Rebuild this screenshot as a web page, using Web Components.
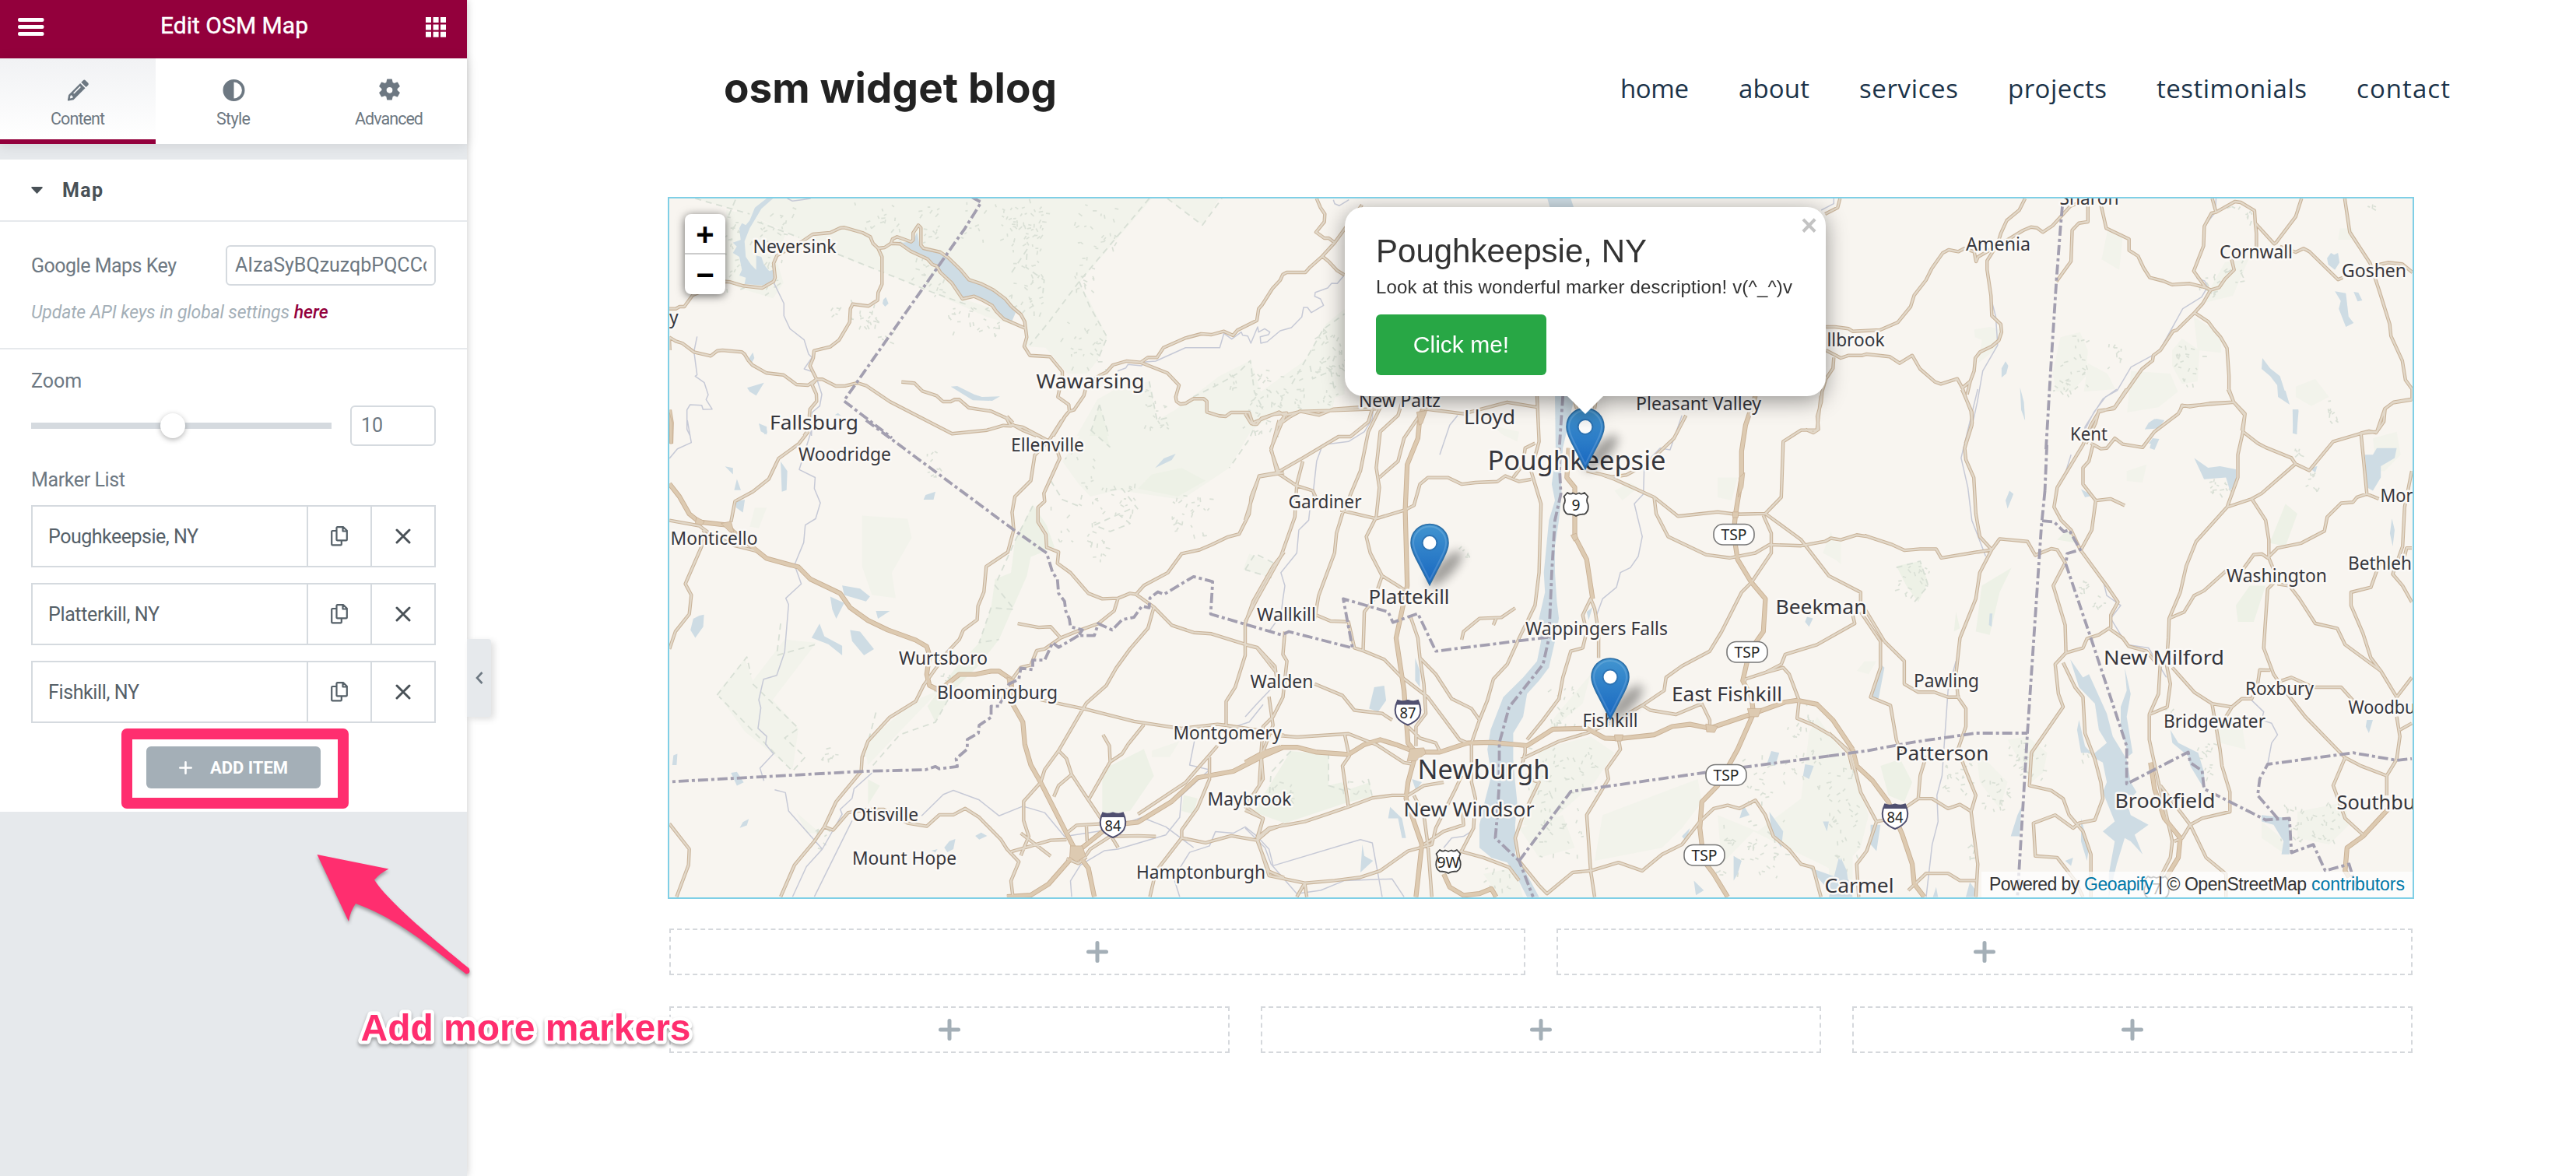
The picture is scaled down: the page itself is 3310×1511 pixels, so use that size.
<!DOCTYPE html>
<html lang="en">
<head>
<meta charset="utf-8">
<title>Edit OSM Map</title>
<style>
html,body{margin:0;padding:0;background:#fff}
body{width:3310px;height:1511px;overflow:hidden;font-family:Roboto,"Liberation Sans",sans-serif}
</style>
</head>
<body>
<app-shell></app-shell>
<script>
const define=(name,html,ready)=>customElements.define(name,class extends HTMLElement{
  constructor(){super();this.attachShadow({mode:'open'}).innerHTML=html;}
  connectedCallback(){if(ready)ready(this,this.shadowRoot);}
});

/* Text run that spreads its letters over a given width. */
define('fit-text',`<style>:host{display:inline-block;white-space:pre}</style><span><slot></slot></span>`,(el,root)=>{
  const w=+el.getAttribute('w'),s=root.querySelector('span'),n=el.textContent.length;
  const ls=(w-s.getBoundingClientRect().width)/(n-1);
  el.style.letterSpacing=ls+'px';el.style.marginRight=-ls+'px';
});

define('panel-header',`<style>
:host{display:flex;box-sizing:border-box;height:75px;background:#93003c;color:#fff;align-items:center;justify-content:space-between;padding:0 27px 9px 23px;font-size:30px;line-height:30px}
svg{display:block}.b{margin-top:4px}fit-text{-webkit-text-stroke:.4px #fff;position:relative;left:-1px}</style>
<svg class="b" width="34" height="24" viewBox="0 0 34 24" fill="#fff"><rect y="0" width="33.5" height="5" rx="2.2"/><rect y="9" width="33.5" height="5" rx="2.2"/><rect y="18" width="33.5" height="5" rx="2.2"/></svg>
<fit-text w="190">Edit OSM Map</fit-text>
<svg class="b" width="26" height="26" viewBox="0 0 26 26" fill="#fff"><path d="M0 0h7v7H0zM9.6 0h7v7h-7zM19 0h7v7h-7zM0 9.4h7v7H0zM9.6 9.4h7v7h-7zM19 9.4h7v7h-7zM0 18.8h7v7H0zM9.6 18.8h7v7h-7zM19 18.8h7v7h-7z"/></svg>`);

const tabIcons={
 pencil:'<path d="M20.4 1.2c.8-.9 2-.9 2.9 0l3.4 3.4c.8.8.8 2 0 2.9l-2.6 2.6-6.3-6.3zM16.6 4.9l6.4 6.4L8 26.3l-6.7 1.1c-.6.1-1-.3-.9-.9L1.6 19.9zM4 20.9l-.6 3.6 3.6-.7v-2.3H5.6v-1.4zM16.2 8.8 7.6 17.4l1.2 1.2 8.6-8.6z" fill-rule="evenodd"/>',
 half:'<path d="M14 0a14 14 0 1 0 0 28a14 14 0 1 0 0-28zM14 3.6a10.4 10.4 0 0 1 0 20.8z" fill-rule="evenodd"/>',
 gear:'<path d="M11.3 0h5.4l.9 4.2 2.3 1.3 4.1-1.4 2.7 4.7-3.2 2.9v2.6l3.2 2.9-2.7 4.7-4.1-1.4-2.3 1.3-.9 4.2h-5.4l-.9-4.2-2.3-1.3L4 21.900 1.300 17.200l3.200-2.900v-2.600L1.300 8.800 4 4.100l4.100 1.400 2.300-1.300zM14 9.300a4.500 4.500 0 1 0 0 9a4.500 4.500 0 1 0 0-9z" fill-rule="evenodd" stroke="#6d7882" stroke-width="1.200" stroke-linejoin="round"/>'
};
define('panel-tab',`<style>
:host{display:flex;flex:1;flex-direction:column;align-items:center;box-sizing:border-box;height:110px;padding-top:26px;gap:9px;color:#6d7882;font-size:21.500px;line-height:26px;background:#fff}
:host([active]){background:linear-gradient(#f1f2f4,#fff);border-bottom:6px solid #93003c}
svg{display:block;fill:#6d7882}</style><svg width="29" height="30" viewBox="-.5 -.5 29 29"></svg><slot></slot>`,(el,root)=>{root.querySelector('svg').innerHTML=tabIcons[el.getAttribute('icon')];});

define('marker-row',`<style>
:host{display:flex;box-sizing:border-box;height:80px;border:2px solid #d5dadf;color:#556068;font-size:25px;align-items:stretch}
div{display:flex;align-items:center}.t{flex:1;padding-left:20px}.i{width:80px;justify-content:center;border-left:2px solid #d5dadf}</style>
<div class="t"><slot></slot></div>
<div class="i"><svg width="22" height="26" viewBox="0 0 22 26" fill="none" stroke="#556068" stroke-width="2.200" stroke-linejoin="round"><path d="M7.500 2.200c0-.6.500-1 1-1h7.700l4.600 4.600v11.600c0 .6-.5 1-1 1H8.500c-.6 0-1-.5-1-1zM15.500 1.500v5h5M7.300 6H2.400c-.7 0-1.200.5-1.200 1.200v16c0 .7.500 1.200 1.200 1.200h10.200c.7 0 1.200-.5 1.200-1.200v-4.600"/></svg></div>
<div class="i"><svg width="20" height="20" viewBox="0 0 20 20" stroke="#495157" stroke-width="3" stroke-linecap="round"><path d="M2 2 18 18M18 2 2 18"/></svg></div>`);

define('text-box',`<style>
:host{display:block;box-sizing:border-box;height:52px;border:2px solid #d5dadf;border-radius:6px;padding:0 10px;font-size:25px;line-height:48px;color:#6d7882;background:#fff}
div{overflow:hidden;white-space:nowrap}</style><div><slot></slot></div>`);

define('zoom-slider',`<style>:host{display:flex;align-items:center;width:386px;height:32px;background:linear-gradient(#d5dadf,#d5dadf) center/100% 8px no-repeat;}
.l{width:166px}.k{width:32px;height:32px;border-radius:50%;background:#fff;box-shadow:0 2px 7px rgba(0,0,0,.3)}</style><span class="l"></span><span class="k"></span>`);

define('edit-panel',`<style>
:host{display:flex;flex-direction:column;width:600px;height:1511px;background:#e6e9ec;box-shadow:0 0 10px rgba(0,0,0,.22);color:#6d7882;font-size:25px;position:relative}
.tabs{display:flex;box-shadow:0 2px 16px rgba(0,0,0,.1)}
.body{background:#fff;margin-top:20px;height:838px;display:flex;flex-direction:column}
.sec{display:flex;align-items:center;height:78px;padding-left:40px;gap:25px;border-bottom:2px solid #e6e9ec;color:#495157;font-weight:700}
.key{display:flex;justify-content:space-between;align-items:center;padding:30px 40px 0}
.key text-box{width:270px}
.hint{padding:0 40px;margin-top:18px;height:62px;line-height:34px;font-size:23px;font-style:italic;color:#a4afb7;border-bottom:2px solid #e6e9ec}
.hint b{color:#93003c;font-weight:500}
.lab{padding-left:40px;line-height:30px}
.zoom{display:flex;justify-content:space-between;align-items:center;padding:0 40px}.zoom text-box{width:110px;padding-left:12px}
.list{display:flex;flex-direction:column;gap:20px;padding:0 40px}
.hl{align-self:center;margin-top:7px;margin-left:4px;box-sizing:border-box;width:292px;height:103px;border:14px solid #ff2e6f;border-radius:7px;display:flex;align-items:center;justify-content:center;}
.btn{display:flex;align-items:center;justify-content:center;gap:23px;width:224px;height:54px;border-radius:6px;background:#a4afb7;color:#fff;font-size:22px;font-weight:700;margin-right:4px;margin-top:-3px}
.grip{position:absolute;left:600px;top:821px;width:31px;height:100px;background:#e6e9ec;border-radius:0 4px 4px 0;box-shadow:4px 3px 9px rgba(0,0,0,.13);display:flex;align-items:center;justify-content:center}
</style>
<panel-header></panel-header>
<div class="tabs"><panel-tab icon="pencil" active><fit-text w="70">Content</fit-text></panel-tab><panel-tab icon="half"><fit-text w="44">Style</fit-text></panel-tab><panel-tab icon="gear"><fit-text w="88">Advanced</fit-text></panel-tab></div>
<div class="body">
<div class="sec"><svg width="15" height="9" viewBox="0 0 15 9"><path d="M1 0h13l1 1-7.500 8L0 1z" fill="#495157"/></svg><fit-text w="52">Map</fit-text></div>
<div class="key"><fit-text w="187">Google Maps Key</fit-text><text-box><fit-text w="254">AIzaSyBQzuzqbPQCCc</fit-text></text-box></div>
<div class="hint"><fit-text w="332">Update API keys in global settings</fit-text> <b>here</b></div>
<div class="lab" style="margin-top:26px">Zoom</div>
<div class="zoom" style="margin-top:16px"><zoom-slider></zoom-slider><text-box>10</text-box></div>
<div class="lab" style="margin-top:29px"><fit-text w="121">Marker List</fit-text></div>
<div class="list" style="margin-top:17px"><marker-row><fit-text w="193">Poughkeepsie, NY</fit-text></marker-row><marker-row><fit-text w="143">Platterkill, NY</fit-text></marker-row><marker-row><fit-text w="117">Fishkill, NY</fit-text></marker-row></div>
<div class="hl"><div class="btn"><svg width="17" height="17" viewBox="0 0 17 17" stroke="#fff" stroke-width="2.600" stroke-linecap="round"><path d="M8.500 1.300v14.400M1.300 8.500h14.400"/></svg><fit-text w="100">ADD ITEM</fit-text></div></div>
</div>
<div class="grip"><svg width="10" height="16" viewBox="0 0 10 16" fill="none" stroke="#6d7882" stroke-width="2.600"><path d="M8.500 1 2 8l6.500 7"/></svg></div>`);

define('site-header',`<style>
:host{display:flex;height:253px;box-sizing:border-box;align-items:flex-start;justify-content:space-between;padding:78px 162px 0 330px;font-family:Inter,sans-serif}
.brand{font-size:53px;line-height:70px;font-weight:700;color:#222}
nav{display:flex;gap:64px;margin-top:11px;font-family:"Open Sans",sans-serif;font-size:33px;line-height:50px;color:#1b3349}
</style><fit-text class="brand" w="428">osm widget blog</fit-text>
<nav><fit-text w="88">home</fit-text><fit-text w="91">about</fit-text><fit-text w="127">services</fit-text><fit-text w="127">projects</fit-text><fit-text w="193">testimonials</fit-text><fit-text w="120">contact</fit-text></nav>`);

define('drop-zone',`<style>:host{display:flex;flex:1;height:60px;box-sizing:border-box;border:2px dashed #d5d8dc;align-items:center;justify-content:center}</style>
<svg width="30" height="30" viewBox="0 0 30 30" stroke="#a4afb7" stroke-width="5" stroke-linecap="round"><path d="M15 3.500v23M3.500 15h23"/></svg>`);

define('zoom-buttons',`<style>:host{display:flex;flex-direction:column;width:52px;border-radius:8px;background:#fff;box-shadow:0 2px 12px rgba(0,0,0,.6);color:#000;font:700 40px/52px "Liberation Sans",sans-serif;text-align:center}
div{height:51px}.a{height:50px;border-bottom:2px solid #ccc}</style><div class="a">+</div><div>−</div>`);

define('map-popup',`<style>
:host{display:block;width:618px;height:243px;filter:drop-shadow(0 6px 14px rgba(0,0,0,.4));font-family:"Liberation Sans",sans-serif;color:#333}
.card{box-sizing:border-box;height:243px;border-radius:24px;background:#fff;display:flex;flex-direction:column;align-items:flex-start;padding:34px 40px 0}
.t{font-size:42px;line-height:46px}.d{font-size:24px;line-height:30px;margin-top:8px}
.b{margin-top:20px;width:219px;height:78px;border-radius:6px;background:#28a745;color:#fff;font-size:30px;display:flex;align-items:center;justify-content:center}
.x{position:absolute;right:11px;top:5px;font:700 36px/38px "Liberation Sans",sans-serif;color:#c3c3c3}
.tip{position:absolute;left:285px;top:242px;display:block}
</style><div class="card"><fit-text class="t" w="348">Poughkeepsie, NY</fit-text><fit-text class="d" w="535">Look at this wonderful marker description! v(^_^)v</fit-text><div class="b">Click me!</div></div><span class="x">×</span>
<svg class="tip" width="48" height="24" viewBox="0 0 48 24"><path d="M0 0h48L24 24z" fill="#fff"/></svg>`);

define('map-credit',`<style>:host{display:flex;box-sizing:border-box;width:554px;height:33px;padding-left:10px;background:rgba(255,255,255,.72);font:23px/33px "Liberation Sans",sans-serif;color:#333;white-space:pre}i{font-style:normal;color:#0078a8}</style>
<fit-text w="122">Powered by </fit-text><i><fit-text w="89">Geoapify</fit-text></i><fit-text w="203"> | © OpenStreetMap </fit-text><i><fit-text w="120">contributors</fit-text></i>`);

/* Survey tiles: origin and scale that take traced points to map space. */
const K=800/1568,TILES={
A:[850,250,1/3,1/3],B:[1300,250,1/3,1/3],D:[2320,250,790/1568,1/3],E:[850,540,K,640/1568],F:[1600,500,K,660/1568],G:[2350,500,K,660/1568],P:[0,0,1,1]};
const ROADS={
A:`30,440 55,440 70,432 88,432 120,388 246,335 265,337 315,352 388,360 432,335 438,320 432,265 445,235 540,182 583,153 650,147 690,128 705,127 775,147 805,163 815,188 835,207 860,204 885,188 920,190 960,218 1025,248 1045,270 1060,275 1075,300 1118,340 1160,402 1205,392 1240,408 1275,428 1290,450 1320,480 1350,493 1405,517
885,188 890,172 908,163 962,182 970,175 970,148 990,118 1000,128 1000,195 1010,207 1075,222 1105,243 1155,292 1185,328 1230,343 1280,368 1325,402 1350,432
835,207 850,240 850,345 835,378 833,407 797,430 737,422 728,440 725,492 685,560 650,587 588,602 585,630 572,660 598,712 580,732 597,770 598,797 572,828 570,850 570,900 550,930
30,550 55,565 80,573 125,607 190,622 215,602 235,600 310,607 320,615 335,640 350,657 405,688 470,695 520,732 565,735 598,712 620,712 672,738 710,737 755,726 790,737 880,798 1120,922 1255,908 1318,890 1350,892
925,722 975,727 1005,757 1060,775 1085,798 1115,798 1130,790 1148,790 1185,822 1270,835 1330,862 1345,890
30,550 32,600`,
B:`0,432 35,462 50,490 58,550 48,585 70,620 148,625 195,682 195,700 178,780 220,810 222,835 240,830 278,775 290,730 340,697 365,685 390,657 442,642 497,647 525,628 560,628 585,590 670,553 730,537 770,540 818,527 853,543 870,523 945,485 952,440 965,425 1005,362 1035,330 1045,308 1060,300 1132,300 1150,280 1197,238 1245,185 1283,133 1350,40
1175,15 1190,50 1207,75 1205,105 1173,145 1205,168 1222,168 1245,185
1197,238 1222,258 1255,293 1283,310
497,647 600,688 645,735 632,780 635,797 650,808 670,805 700,787 740,787 752,797 752,838 800,853 825,855 845,840 915,840 930,885 945,885 962,863 1010,847 1060,842 1025,890 1015,930
1025,890 1075,855 1112,835 1185,850 1240,827 1340,820
222,835 205,855 160,930
0,885 45,910 95,930`,
D:`560,15 545,60 513,100 498,150 490,190 463,255 463,290 473,390 475,467 498,500 500,530 493,562 475,585 445,607 433,630 430,680 420,720 400,745 410,790 422,835 425,880 408,960
420,720 412,770
700,30 675,45 630,120 605,145 590,128 575,125 555,138 520,170 440,240 435,258 430,220 405,208 390,220 365,213 350,225 322,285 307,330 277,388 268,432 235,493 190,522 120,527 110,517 75,510 52,510
720,30 720,105 697,110 680,137 677,257 640,335
752,30 767,130 825,172 825,215 848,237 862,282 878,320 912,333 935,347 980,343 1020,358 990,295 1015,198 1017,122 1035,72 1047,68 1037,15
1047,68 1095,27 1110,30 1145,62 1147,110 1195,190 1200,185 1250,85 1265,15
1147,110 1150,150 1150,210
1210,200 1250,222 1270,208 1285,220 1358,328 1370,320
1085,240 1093,290 1070,325 1055,358 1033,368 1020,358
1033,368 1013,420 992,455 947,522 937,527 905,600 887,620 885,640 858,673 787,825 748,833 740,880 715,960
992,455 1027,490 1043,523 1058,548 1075,592 1080,700 1080,750 1092,800 1120,850 1113,910
1375,15 1388,145 1440,265 1463,370 1490,500 1493,545 1522,640 1530,715 1547,750 1547,790
1092,800 1030,805 980,818 960,812 955,835
1547,788 1500,800 1478,825 1475,875 1455,918 1437,912 1415,920
1463,270 1485,262 1522,268 1548,300
52,600 90,630 110,620 145,620 155,615 215,625 240,650 272,620 292,672 330,722 345,730 387,710 400,745
72,628 70,670 52,710 42,760 40,800 30,855 33,905 20,918 0,905
88,15 82,50 50,75`,
E:`20,315 95,332 120,355 185,395 240,412
105,345 112,362 100,400 60,515 75,550 70,610 35,665 20,720
370,35 345,75 295,120 270,185 230,225 185,255 175,320
20,1270 70,1350 68,1400 38,1500
880,15 910,22 975,65
870,-12 885,8
1008,0 975,65 940,110 930,190 890,240 883,290 887,345 872,415 818,460 812,540 797,585 795,628 760,660 750,690 720,730 660,835 640,885 575,935 520,1010 505,1060 503,1105 440,1200 410,1280 385,1325 335,1400 300,1500
990,70 1003,120 963,230 965,255 948,275 948,320 968,360 970,400 1000,415 997,450 1030,480 1075,545 1110,562 1150,560 1180,545 1195,548 1240,588 1285,645 1340,668 1385,672 1470,705 1500,715 1545,775 1550,820
1195,548 1215,520 1275,480 1310,420 1355,408 1385,392 1425,368 1455,358 1480,295 1485,240 1505,178 1568,165
1555,0 1535,95 1555,165 1568,180
1568,415 1540,460 1490,570 1470,640 1470,740 1445,840 1422,885 1422,960
1150,560 1140,600 1100,640 1055,660 1005,685 965,720 945,725 930,770 905,778 880,820
897,640 920,645 950,652 980,650 1005,685
1240,588 1225,655 1180,720 1145,780 1120,835 1070,890 1035,965 1000,1040 1020,1065 1033,1115 1075,1195 1110,1260
1000,1040 965,1100 955,1140 912,1200 912,1260 925,1310 905,1370
1033,1115 1000,1150 988,1185
955,880 1070,910 1190,948 1280,965 1310,970 1400,957 1420,960 1500,975 1568,992
1112,990 1128,1025 1130,1075 1160,1050 1175,1020 1215,958
1130,1075 1075,1195
1020,1300 1045,1275 1110,1270
880,1358 980,1322 1020,1320
905,1300 980,1372
1070,1275 1072,1325
1060,1385 1080,1350 1130,1310 1200,1308 1245,1310
1135,1315 1150,1345
1200,1240 1320,1140 1400,1025
1380,1060 1380,1130 1350,1220 1310,1290 1310,1315 1245,1420 1230,1500
1310,1315 1370,1330 1435,1308 1500,1322 1530,1290 1568,1272
1500,1322 1530,1420 1568,1440
1470,1215 1515,1255 1500,1322
1530,870 1540,960 1510,1060 1505,1150 1470,1215
410,1280 432,1290 470,1235 520,1225 560,1225 620,1268 668,1278 700,1242 735,1242 765,1222 800,1250 855,1320 870,1350 900,1390 880,1450 885,1500
1020,1380 1050,1395 1070,1375`,
F:`0,75 15,105 85,70 100,80 140,68 225,65 330,60
100,80 65,180 80,255 130,295 170,310 180,335
0,400 35,265 80,255 145,210 235,145 265,145 310,100 330,20
355,20 310,130 290,250 245,380 230,440 225,500 185,630 175,700
400,20 385,80 340,130 330,240 338,300 330,390 305,450 315,500 345,570 385,600 410,620
445,70 400,150 385,220 338,270
240,370 330,395 400,370 425,355 440,290 460,270 510,270 545,290 580,285 635,282 655,265 690,282 720,275
730,165 705,180 700,230 675,270
735,20 740,160 720,250 745,350 740,560 730,660 690,760 660,840 625,885 610,950 590,1010 570,1080 570,1200 580,1250 575,1340 545,1410
450,60 550,75 660,40 735,55
145,220 130,290 125,390 90,510 30,640 0,710
180,690 215,708 260,710 275,790 300,800 350,825 390,875 460,940 540,1070 560,1080
345,570 325,640 300,680 297,800
415,690 435,760 440,820 480,870 520,945 570,975 590,1010
440,820 450,900 455,990 430,1030 430,1090
0,780 30,790 75,860
100,740 95,810 105,830 95,940 70,1000 45,1030 40,1110 45,1190 0,1280
175,900 245,935 275,980 345,990 370,1010
90,1058 130,1062 260,1052 330,1085 400,1140 425,1145
250,1052 262,1120 245,1150 260,1275
0,1285 45,1310 30,1370 60,1340 150,1320 200,1300 260,1275 320,1248 370,1240 410,1240 450,1210 500,1200
410,1030 440,1065 480,1080 490,1105
545,1180 530,1220 480,1340 470,1390 410,1410 340,1470 290,1490 225,1500 150,1508 60,1485 30,1370
425,1240 450,1300 460,1390 470,1550
150,1508 130,1550
150,1508 155,1550
545,1260 550,1330 500,1350 450,1390
540,1410 600,1430 665,1460 690,1500
705,1085 705,1110 690,1180 740,1200 700,1300 680,1370 690,1440 740,1515 760,1540 825,1475 870,1470 940,1445 1000,1470 1050,1420 1100,1390 1145,1320 1180,1280 1215,1270 1245,1280 1285,1255 1310,1300 1330,1365 1370,1405 1400,1450 1430,1460 1450,1550
695,1130 790,1075 860,1050 930,1015 1000,965 1020,980 1085,993 1150,960 1170,1010 1170,1040
710,1070 750,1010 790,945 800,880 820,800 850,790 860,740 850,690 870,640 880,670 890,740 890,820
1000,965 1055,920 1060,880 1100,845 1170,800 1200,740 1250,620 1275,590
1110,80 1080,150 1010,230 960,262 925,268 860,250
900,262 930,275 1030,330 1090,388 1190,375 1235,382 1310,380 1400,460 1470,570 1550,620 1550,650
1030,330 1035,380 1065,450 1160,505 1220,515 1285,500 1320,475 1400,478 1460,465 1475,455 1500,460 1540,445 1568,450
1310,380 1350,330 1355,160 1400,125 1440,125 1450,20
1305,385 1325,440 1325,500 1275,590
1530,690 1535,715 1440,780 1360,810 1350,840 1310,865
1310,865 1355,850 1370,870 1395,950 1390,1005 1430,1025 1480,1060 1520,1110 1530,1160
1310,865 1260,885 1255,900
940,1067 945,1100 910,1160 915,1190 860,1300 870,1470 880,1550
545,765 550,740 590,700 645,697 680,668
625,720 632,700
825,20 835,60
885,20 880,60`,
G:`335,0 360,70 360,110 342,180 345,215 365,270 370,380 380,450 410,490 380,560 370,640 330,760 320,870 325,940 345,975 345,1030 325,1100 340,1150 370,1240 358,1290 375,1450 370,1550
410,490 430,457 500,465 520,507 560,487 575,490 595,530 565,600 595,720 597,805 640,790 650,762 680,750 705,730 740,760 755,785 800,800 820,830
90,447 160,475 190,492 230,488 270,488 283,515 410,490
750,0 720,55 680,70 660,110 640,170 575,300 567,360 585,400 610,430 633,490 700,600 728,650 710,690 710,730
665,170 655,220 640,240 640,290 672,340 662,430 635,490
660,165 685,182 700,180 720,150 740,168 790,178 820,130 880,75 890,52 940,48 1020,40 1005,0
672,340 710,335 745,355
1020,40 1048,75 1043,130 1030,200 1030,270 1003,360 1065,335 1090,318 1175,228 1165,210 1100,178 1080,165 1043,130
1175,228 1210,248 1270,160 1340,135 1380,130 1400,60 1420,42 1468,32
1340,135 1355,320 1330,330 1320,345 1290,348 1255,390 1248,433 1190,470 1130,485 1105,515 1090,503 1070,505 1040,555
1003,360 925,465 900,540 885,620 857,700 855,760 850,840 860,900 852,970 807,993 807,1070 830,1200 850,1300
857,700 895,680 920,630 945,615 1000,555
1065,335 1100,400 1108,460 1108,515 1130,580 1105,610 1100,700 1095,790 1120,870 1145,915
1130,595 1160,600 1185,640 1225,715 1280,730 1300,780 1390,860 1430,940 1468,880
1468,650 1445,600 1420,565 1445,480 1450,360 1468,250
1390,520 1365,605 1315,620 1315,660 1345,745 1365,820 1390,860
1355,320 1385,335
1468,485 1455,485 1450,510
865,850 920,925 965,960 1015,970 1040,945 1065,945 1080,900 1085,857 1112,858
1015,970 1000,1000
1140,890 1165,880 1220,910 1290,910 1320,950
965,960 985,1100 990,1150 1010,1230 1010,1290 940,1310 910,1330 890,1370 870,1380
835,1210 910,1330 950,1430 1000,1480 1000,1550
1145,915 1200,1000 1240,1050 1300,1125 1340,1150 1405,1180 1405,1240
1430,1000 1438,1060 1430,1130 1405,1180
1438,1040 1468,1020
1300,1125 1270,1210 1300,1310 1345,1360
835,830 830,930 807,993
597,805 570,840 578,930 590,970 510,1110 505,1210 560,1225 590,1250 605,1300 640,1350 660,1420 660,1550
590,835 620,910 640,940 645,1050 670,1130 685,1200 690,1250 670,1315 630,1325 615,1340 570,1300 515,1325 520,1425 575,1430 620,1500 640,1550
140,770 190,830 190,900 225,925 265,925 300,940 330,940
80,680 130,770 130,850 105,940 155,965 170,1070 185,1120
90,670 100,690 140,770
0,1050 55,1110 80,1230 120,1320 95,1410 70,1450 75,1550
245,1120 230,1180 225,1250 195,1275
225,1250 260,1250 300,1280 330,1268 360,1290
200,1530 245,1478 300,1478 330,1500 370,1500
120,1320 140,1315
850,1300 865,1380 860,1430 830,1500`};
const HIGHWAYS={
A:`30,830 38,880 36,960`,
E:`20,200 45,240 70,295 95,320 165,330 180,350 235,405 265,435 345,462 375,500 450,545 475,590 520,630 570,660 640,692 668,712 675,740 668,800 675,835 700,850 750,800 790,800 830,790 850,790 880,815 885,895 910,950 915,1020 930,1085 955,1140 1020,1300 1045,1360 1075,1410 1090,1500
870,1500 930,1495 975,1460 1045,1360 1110,1295 1150,1272 1200,1265 1285,1200 1350,1125 1440,1105 1510,1060 1568,1028`,
F:`460,20 440,85 435,150 408,230 403,370 408,600 380,760 400,920 410,1080 430,1110 410,1200 405,1250 445,1390 430,1550
90,1093 130,1093 180,1108 260,1115 300,1085 340,1070 380,1085 430,1108 490,1108 560,1080 620,1078 710,1088 775,1038 860,1035 905,1065 940,1067 1030,1055 1075,1030 1120,1023 1170,1035 1280,990 1360,955 1390,950 1440,962 1480,1010 1530,1100
1285,20 1260,110 1250,190 1250,270 1235,380 1230,440 1240,520 1275,590 1310,640 1305,740 1270,800 1253,890 1275,940 1280,990 1240,1100 1190,1210 1150,1260 1145,1340 1155,1440 1180,1480 1215,1550
815,180 810,270 830,300 830,450 860,520 870,600 875,640
500,1480 515,1520 550,1545 590,1540 620,1525 632,1550
0,1140 45,1110 90,1093`,
G:`60,1100 70,1150 110,1195 150,1260 185,1360 210,1450 215,1510 240,1550
1410,1280 1345,1365 1305,1400 1300,1470 1310,1490
810,1140 820,1220 845,1310 885,1370 880,1430 850,1490`};
/* Interchanges, where ramps merge into a wide patch. */
const JUNCTIONS={
A:`30,840 42,880 42,960 32,960`,
E:`150,325 175,318 182,352 172,352
1030,1340 1060,1340 1068,1372 1045,1390 1028,1375
88,305 108,318 102,330 85,325
870,808 888,815 886,835 872,830`,
F:`432,70 458,65 446,105 438,110
415,1098 450,1095 455,1112 430,1135 408,1135
1265,975 1300,975 1292,1000 1270,1000
1160,1022 1190,1030 1182,1048 1162,1046
1244,270 1258,255 1254,300 1242,330
820,446 834,440 838,456 828,464
1228,375 1243,375 1241,392 1228,392
930,1055 952,1055 948,1074 932,1074`};
const THIN={
A:`432,338 472,420 472,467 495,517 550,560 567,615 580,628 550,672 578,682 600,715 618,770 610,815 580,840 578,930
137,547 125,605 137,695 130,700 165,725 180,772 172,790 195,827 160,828 155,812 110,810 98,830 98,905 110,930
485,15 505,25 540,20 575,15`,
B:`408,680 440,668 448,655 500,660 515,645 555,642 670,590 802,590 818,535 848,557 885,530 890,542 910,545 922,573 948,510 952,530 975,517 995,530 990,540 958,548 960,573 985,567 1035,525 1078,513 1118,472 1125,435 1140,435 1155,455 1202,427 1190,402 1168,392 1170,377 1218,360 1233,342 1255,343 1280,313
1240,20 1245,35 1262,43 1300,20`,
D:`72,15 72,35 40,60
473,400 485,470 490,580 452,680 438,800 425,890
1047,15 1045,68 1018,120 1017,200 990,295 1000,325 1018,333 1025,357 1010,395 962,440 905,595 885,620 830,665 795,755 765,780 735,840 705,930`,
E:`65,0 75,70 40,90 20,120
378,30 347,155 387,180 385,215 400,260 388,310 362,330 358,385 335,455 352,515 313,560 320,580 310,730 290,803 257,815 245,880 250,905 243,970 265,995 262,1020 282,1050 248,1095 258,1135
285,1163 312,1172 320,1230 405,1350
530,1110 485,1160 480,1190 450,1225 455,1240 405,1350 365,1405 330,1500
480,1260 385,1500
655,1245 710,1178 735,1165 800,1195 850,1245 910,1215 965,1235 1015,1310 1120,1290 1210,1250 1270,1280 1340,1345
1350,960 1330,1085 1380,1100
1380,1100 1310,1180 1305,1250 1270,1305 1150,1350 1115,1355 1055,1400 1030,1450 1033,1500
1515,895 1480,950 1430,970
1305,1500 1290,1440 1330,1360 1380,1340 1395,1295 1440,1300 1470,1280 1500,1310 1530,1350 1540,1400`,
F:`535,80 515,110 490,200
1100,80 1070,185 1045,180 1005,230 1003,320 980,350 990,400 1000,450 990,510 970,545 945,560 935,605 900,640 885,690
165,340 160,400 135,430 130,500 90,560 100,600 95,640 90,690 60,740
85,890 30,960 0,1000
325,20 320,90 300,130 260,160 195,170 180,220 170,330
70,1455 290,1375 320,1385 345,1550
0,1340 50,1400 65,1450 130,1540 190,1530 250,1500 370,1495 400,1550
500,1400 520,1370 550,1365 570,1350`,
G:`725,0 690,30 645,115 640,170
610,200 592,270
375,0 333,210 350,300 360,400 395,510
655,530 690,580 700,630 735,660 710,700 750,780 805,790 850,880
1065,950 1095,985 1090,1010 1115,1020 1130,1055 1115,1080 1105,1145
320,830 300,920 285,1180 272,1240 275,1320 260,1390 245,1550`};
const WATER={
A:`405,15 360,50 340,100 325,118 310,110 300,130 305,175 275,185 290,200 275,225 300,240 310,290 300,312 325,320 320,345 390,350 432,330 430,290 415,295 395,270 385,240 365,235 365,290 345,270 325,240 320,180 340,130 355,105 385,55 430,15
905,170 930,185 970,180 985,145 995,195 1010,210 1095,235 1150,290 1185,330 1230,345 1275,370 1320,400 1350,440 1365,455 1350,490 1310,470 1280,430 1210,390 1160,402 1120,340 1075,295 1050,270 990,232 945,200
855,405 865,395 875,420 862,432 852,420
352,608 332,640 345,655 358,630
330,745 395,725 365,775 340,760
1115,740 1140,738 1205,770 1235,780 1305,778 1275,795 1200,793
375,885 405,900 408,918 398,925
668,850 680,842 692,852`,
D:`1330,245 1340,225 1348,232 1358,225 1362,262 1350,290 1333,270
1350,373 1378,380 1385,470 1398,495 1378,510 1360,440 1365,410
1398,375 1410,378 1420,408 1408,412
1165,630 1185,670 1210,700 1225,770 1235,810 1205,780 1203,735 1185,700 1163,672
1242,828 1257,828 1253,925 1243,920
510,643 517,660 512,690 500,705 500,670
547,743 557,800 560,870 550,830
875,880 890,865 915,872 895,900 865,905
885,940 900,945 890,960 875,960`,
E:`95,615 107,612 105,650 85,685 73,660 80,625
300,130 317,160 315,220 303,225
160,145 180,150 180,170
190,185 200,220 183,220
188,255 210,250 205,290 188,275
455,520 500,530 525,555 515,570 460,550
425,555 460,575 440,625 430,595
540,600 575,600 545,625
378,685 398,640 410,680 455,710 455,740 420,705
475,660 500,665 535,720 510,740 480,695
245,10 265,20 265,45 250,35
1295,105 1285,125 1243,150 1265,120
690,225 685,250 660,250 665,235
175,1110 190,1107 207,1140 190,1150
30,1055 40,1050 38,1085 27,1085
220,1255 215,1275 197,1283 205,1265
790,1308 805,1298 820,1308 800,1320
740,1318 735,1350 720,1360 712,1345 725,1325
680,1355 695,1350 690,1360`,
F:`780,20 830,20 800,180 795,260 797,320 790,400 780,480 780,560 785,650 790,700 780,770 765,850 740,890 710,930 700,1000 675,1050 675,1130 680,1200 685,1260 680,1330 680,1420 700,1460 740,1550 710,1550 680,1480 660,1445 620,1430 590,1400 590,1330 605,1250 620,1180 610,1100 618,1040 650,940 700,880 735,830 745,770 740,700 755,620 752,560 765,400 780,340 772,290 782,200
325,910 350,905 355,950 335,985 312,975
428,820 440,860 440,910 428,890
420,1190 445,1200 430,1225
365,1275 395,1310 405,1370 395,1370 385,1310 360,1310
295,1390 300,1425 322,1440 290,1475
860,680 875,665 865,705
1415,695 1430,700 1420,725 1410,710
1325,1105 1345,1110 1335,1150 1315,1140
1410,1145 1432,1150 1420,1190 1405,1180
1255,1270 1270,1300 1245,1310
1320,1290 1355,1350 1350,1400 1325,1350
1500,1430 1515,1470 1520,1520 1480,1545 1420,1460 1490,1490
1230,1425 1250,1440 1240,1480 1230,1500
1455,1320 1470,1320 1465,1350
1130,1500 1155,1530 1135,1545
1100,1365 1120,1340 1110,1380`,
G:`608,825 640,880 655,870 700,990 715,1060 750,1130 760,1200 775,1230 750,1260 760,1300 805,1330 770,1360 790,1420 760,1380 745,1370 725,1450 705,1550 705,1480 720,1380 690,1350 720,1320 690,1230 700,1200 690,1140 660,1120 700,1080 680,1040 670,960 630,910
745,850 760,930 750,1000 765,1110 755,1120 735,1030 735,970 750,920
630,1010 645,1090 660,1110 635,1110 625,1040
920,210 955,240 985,235 1025,245 1025,290 1010,310 1000,270 945,275
1350,200 1370,200 1380,180 1430,180 1425,210 1390,235 1390,270 1370,310 1355,300
1130,0 1150,5 1160,45 1140,20
1170,65 1183,65 1178,135 1168,135
805,105 825,90 845,95 830,120 800,122
815,150 832,152 820,185 808,180
455,310 465,320 450,365 445,340
1418,395 1425,430 1420,480 1413,440
482,0 490,40 493,95 486,60
130,840 140,850 125,945 108,945
405,685 412,685 410,725 403,720
475,1300 485,1275 480,1365 458,1365
1355,1010 1370,1010 1360,1050 1352,1030
860,1040 880,1080 930,1110 945,1170 945,1220 910,1150 905,1120 865,1080
1090,1300 1160,1310 1160,1420 1140,1420 1145,1380 1120,1330 1090,1320
105,1330 130,1330 120,1410 105,1390
25,1430 50,1500 60,1550 0,1550
635,1310 655,1400 650,1440 635,1380
595,1440 615,1430 610,1455
635,305 665,325 645,330
1210,240 1230,235 1225,255
270,1520 275,1550 262,1550
355,1505 370,1530 365,1550 345,1550`,
P:`1988,254 2018,254 2030,290 1998,290`};
const GREEN={
A:`130,15 1350,15 1350,430 1290,370 1180,320 1100,240 1010,205 920,190 1060,280 1160,402 1280,440 1350,500 1250,470 1040,375 880,310 670,230 510,160 340,75
250,60 340,75 480,150 440,240 470,340 430,400 300,360 246,340`,
B:`0,15 540,15 260,340 300,410 368,550 330,640 290,690 215,690 130,590 50,585 55,500 30,450 0,432
600,15 800,15 738,118
330,790 400,750 530,720 560,870 630,830 800,700 920,640 960,760 1130,640 1210,500 1283,440 1283,770 1100,830 950,860 900,930 250,930`,
D:`430,520 470,510 495,520 490,590 440,650 450,560 432,550
770,140 810,150 800,290 755,250
650,550 700,530 720,600 715,700 680,760 640,760 630,690
935,600 960,555 1005,600 1000,720 960,730 935,660
830,680 930,690 950,760 900,820 820,840
990,470 1060,540 1060,610 1000,600
1250,740 1300,710 1335,780 1290,815 1250,780
1070,260 1130,250 1090,390 1010,420
1363,130 1395,130 1400,175 1358,175
720,650 770,690 790,750 710,760`,
E:`1010,130 1080,0 1500,0 1430,150 1310,250 1150,220 1080,240 1050,200
505,300 620,310 630,370 580,480 590,560 530,550 505,460
140,860 210,750 230,820 310,690 390,700 280,880 345,970 330,1100 210,980
640,880 700,850 600,980 520,1085 510,1020
1480,420 1543,450 1535,495 1465,470
235,275 265,275 245,340 222,335
1235,1040 1305,1010 1280,1060 1235,1060
340,1235 400,1300 365,1300`,
F:`600,1480 680,1460 700,1550 640,1550
740,1100 870,1060 930,1110 880,1200 750,1340 700,1330 720,1220
870,870 780,1000 760,1050 850,960
1190,270 1240,270 1225,340 1190,330
900,1300 1140,1190 1150,1260 1100,1340 1050,1400 880,1440
1190,1300 1290,1350 1400,1250 1420,1050 1440,1000 1530,1150 1530,1500 1450,1450 1330,1380 1280,1350 1200,1450
1475,435 1500,530 1455,500
0,30 60,0 230,0 220,60 80,70 0,140
690,1340 800,1300 830,1400 740,1430
620,110 690,130 685,160 650,140
930,310 970,285 990,300 950,340`,
G:`1370,150 1430,130 1440,200 1400,250 1380,250
450,1070 500,1060 550,1110 540,1170 510,1200
370,1100 450,1200 430,1280 380,1200
1180,1290 1300,1260 1310,1330 1260,1390 1180,1370
0,1120 60,1150 100,1300 80,1400 0,1500
90,830 120,830 100,870 70,860
750,250 800,230 790,285 750,280
0,465 30,465 30,535 0,500
970,1040 1040,1020 1050,1100 985,1080
1090,1320 1140,1370 1150,1420 1090,1370`};
const LEAF={
B:`338,810 375,930 300,930`,
E:`935,265 970,330 990,400 930,430 920,490 885,590 850,690 800,770 735,850 690,950 670,900 740,780 800,700 830,590 840,500 880,480 890,380
1110,1100 1215,1035 1240,1120 1180,1230 1110,1240
520,1130 550,1150 520,1210
1200,215 1235,170 1310,150 1370,190 1300,240
1080,30 1110,0 1130,85
1315,1180 1350,1190 1340,1240 1310,1230`,
F:`115,1105 210,1115 210,1210 245,1200 260,1260 100,1325 20,1290
265,1220 315,1200 315,1245 262,1260`,
G:`170,540 230,525 250,590 225,650 195,600
385,600 460,545 430,620 405,750 370,740
1060,600 1100,600 1070,710 1030,710 1025,660
1150,350 1180,380 1150,480 1110,470
130,1150 180,1130 210,1200 190,1260 150,1240
600,430 625,470 575,460
320,680 330,730 315,740`};
const HEDGE={
A:`130,15 340,75
370,105 530,165
680,230 880,310 1040,375 1180,425
285,20 255,90`,
B:`530,15 260,335 140,495 70,580
260,335 300,430 368,550 330,640
600,15 735,118 810,15
338,810 375,930
338,810 300,930
0,300 60,210 55,280 125,330 120,380
530,720 560,870 600,860
700,780 800,730 870,690 920,640 935,760 970,830
1080,730 1160,590 1200,520 1283,460
1150,660 1160,710 1230,680 1245,760`,
E:`1080,30 1130,85
1180,280 1090,330 1130,350 1180,325 1140,285
1500,0 1480,60 1430,150
140,865 215,745 225,800
300,640 290,740 390,705
230,830 275,885 345,970 310,1000 362,1060 330,1105 145,870
735,850 690,950 600,990 530,1090
540,920 510,1060
1470,470 1495,420 1543,450 1535,495 1470,470
980,190 1010,250 1050,270
1130,220 1160,215 1200,280
935,270 890,380 840,520 885,590
885,595 830,590 800,700 850,690`,
F:`115,1105 65,1170 60,1260
210,1110 210,1210 250,1225
310,1190 320,1245`,
G:`170,545 230,525 250,600 215,650`};
const BORDERS={
A:`1195,9 1232,30 1170,130 703,795 878,930 888,938`,
D:`655,45 650,130 640,330 625,680 613,990`,
E:`515,0 887,345 970,418 985,480 997,500 1000,545 1015,570 1018,600 1027,625 1030,650 1060,660 1050,678 1090,678 1100,640 1135,660 1160,628 1190,620 1210,585 1228,590 1230,560 1250,540 1265,548 1340,492 1388,508 1383,610 1568,678
1050,678 1000,715 985,700 965,755 935,755 935,785 905,780 900,815 875,830 850,900 830,900 830,935 800,960 798,985 770,1005 770,1035 742,1065 745,1090 700,1097 690,1090 665,1100 510,1105 20,1138`,
F:`800,20 790,200 795,320 780,400 772,560 765,760 750,840 665,970 640,1080 640,1200 635,1300 630,1370 690,1440 725,1550
98,747 110,740 270,790 247,640 360,680 372,712 435,685 480,800 765,757
690,1440 820,1228 1160,1170
1250,1155 1470,1120`,
G:`544,310 535,420 525,600 500,1050 475,1550
549,170 544,310
537,402 567,405 592,435 605,430 633,490 600,502 597,535 660,760 750,1090 750,1205 905,1108 910,1140 940,1165 945,1220 1100,1315 1160,1310 1165,1415 1220,1390 1250,1470 1310,1450 1330,1530
1130,1310 1080,1240 1085,1190 1105,1145 1320,1110 1430,1133 1468,1128
0,1120 100,1103 210,1078 370,1050 500,1050`};
/* Scrub patches: x, y, width, height, tick count. */
const SCRUB=[[930,270,30,110,26],[965,265,60,50,22],[985,330,20,50,14],[1098,260,60,35,16],[1180,265,30,50,16],[1235,255,110,60,36],[1160,330,60,50,20],[1215,395,70,35,26],[1070,385,60,35,18],[1105,400,30,20,8],[1130,425,20,20,6],[1300,265,45,45,26],[1380,260,60,60,24],[1300,310,40,60,20],[1380,330,30,50,16],[1300,375,45,30,18],[1365,400,50,40,10],[1375,440,45,35,14],[1470,500,30,50,20],[1610,475,60,50,28],[1690,420,38,60,36],[1670,470,50,50,22],[1600,530,45,30,16],[1560,480,30,20,8],[1350,640,70,60,18],[1370,560,40,80,16],[1410,620,50,50,20],[1505,630,50,60,30],[1400,690,30,30,8],[1200,860,20,35,10],[1045,1060,20,30,8],[1055,960,20,15,8],[2645,430,40,70,22],[2640,490,25,20,8],[2710,440,20,35,10],[2795,440,35,55,20],[2825,350,30,35,14],[2860,330,25,40,10],[2865,265,30,20,10],[3040,262,12,10,4],[2985,515,18,30,10],[2440,725,40,40,20],[2665,745,20,20,8],[2690,765,20,15,6],[2840,615,25,20,14],[2960,605,22,25,10],[2945,570,12,20,6],[2350,980,40,140,44],[2495,980,40,40,22],[2550,1000,35,40,22],[2580,950,50,50,24],[2930,1030,75,50,44],[2820,955,25,20,12],[2830,980,15,20,6],[2675,955,12,22,6],[2780,910,15,12,5],[1960,960,90,60,44],[1990,880,40,50,22],[1975,1020,60,80,30],[2205,1050,90,80,44],[2290,930,50,80,26],[2240,970,40,60,20],[1635,1000,25,30,14],[1715,1000,40,20,10],[1910,1115,30,30,12],[1878,702,10,14,5],[1600,500,50,30,12],[2310,900,25,30,8],[2530,1080,12,30,5],[1195,600,15,15,6],[1190,580,16,12,4]];
const LABELS=[
['Neversink',967.500,325,0,107],['y',860,416,0,12],['Fallsburg',989,552,1,114],['Wawarsing',1331.500,499,1,139],['Woodridge',1026,592,0,119],['Ellenville',1299,580,0,94],['Monticello',861.500,700,0,112],['Wurtsboro',1155,853.500,0,114],['Bloomingburg',1204,898,0,155],['Otisville',1095,1055,0,85],['Mount Hope',1095,1111,0,134],['Hamptonburgh',1460,1129,0,166],['Maybrook',1551.500,1034.500,0,108],['Montgomery',1507.500,950,0,139],
['New Paltz',1746,522.700,0,105],['Lloyd',1881,544.500,1,66],['Pleasant Valley',2102,526.500,0,161],['Gardiner',1655.500,652.500,0,94],['Plattekill',1758.500,776,1,104],['Wallkill',1615,797.500,0,76],['Wappingers Falls',1960,815.500,0,183],['Walden',1606.500,884,0,81],['East Fishkill',2148,900.500,1,142],['Fishkill',2033.500,934,0,71],['Newburgh',1821.500,1000.500,2,170],['New Windsor',1803.500,1049,1,168],['Poughkeepsie',1911.500,604,2,229],['Beekman',2281.500,788.500,1,117],
['Kent',2660,565.500,0,48],['Mor',3058.500,644.500,0,42],['Bethleh',3017,732,0,82],['Washington',2861,747.500,0,129],['New Milford',2703,854,1,155],['Pawling',2459,882.500,0,84],['Roxbury',2885,892.500,0,88],['Woodbu',3017.500,916.500,0,86],['Bridgewater',2780,935,0,131],['Patterson',2435.500,977,1,120],['Brookfield',2717.500,1037.500,1,129],['Southbu',3002.500,1040,1,101],['Carmel',2344.500,1146.500,1,89],
['Sharon',2646.500,262.700,0,76],['Amenia',2526,321.500,0,83],['llbrook',2347.500,444.500,0,74],['Cornwall',2852,332.300,0,94],['Goshen',3009,355.700,0,83]];
const SIZES=[22.800,26.300,34];

const lines=set=>Object.entries(set).flatMap(([k,v])=>{const[ox,oy,sx,sy]=TILES[k];
  return v.trim().split('\n').map(l=>l.trim().split(' ').map(p=>{const[x,y]=p.split(',').map(Number);return(ox+x*sx).toFixed(1)+' '+(oy+y*sy).toFixed(1)}).join('L'));});
const stroke=(set,attrs)=>`<path d="${lines(set).map(l=>'M'+l).join('')}" fill="none" stroke-linejoin="round" ${attrs}/>`;
const area=(set,fill,extra='')=>`<path d="${lines(set).map(l=>'M'+l+'Z').join('')}" fill="${fill}" ${extra}/>`;
const scrub=()=>{let s=7;const r=()=>(s=(s*16807)%2147483647)/2147483647;let d='';
  for(const[x,y,w,h,n]of SCRUB)for(let i=0;i<n;i++){const a=r()*Math.PI,l=3+r()*3,cx=x+r()*w,cy=y+r()*h;
    d+=`M${cx.toFixed(1)} ${cy.toFixed(1)}l${(Math.cos(a)*l).toFixed(1)} ${(Math.sin(a)*l).toFixed(1)}`;}
  return `<path d="${d}" stroke="#dae0d6" stroke-width="1.700" fill="none"/>`;};
const shieldText=(x,y,t,s,w)=>`<text x="${x}" y="${y}" font-size="${s}" text-anchor="middle" textLength="${w}" lengthAdjust="spacingAndGlyphs" fill="#222">${t}</text>`;
const interstate=(x,y,t)=>`<g transform="translate(${x} ${y})"><path d="M-13-15.500Q-8-13 0-15.500Q8-13 13-15.500Q19-3 14 6Q10 12 0 16Q-10 12-14 6Q-19-3-13-15.500z" fill="#fff" stroke="#4f4f70" stroke-width="2"/><path d="M-13-15.500Q-8-13 0-15.500Q8-13 13-15.500L15.500-10H-15.500z" fill="#4f4f70"/></g>`+shieldText(x,y+7.500,t,20,21);
const usRoute=(x,y,t,w)=>`<path transform="translate(${x} ${y})" d="M-11-15Q-7-12-4-14.500L0-13L4-14.500Q7-12 11-15L15.500-10Q12.500-5 15.500 0Q17 9 11 12.500Q4 12.500 0 15Q-4 12.500-11 12.500Q-17 9-15.500 0Q-12.500-5-15.500-10z" fill="#fff" stroke="#444" stroke-width="1.800" stroke-linejoin="round"/>`+shieldText(x,y+7.500,t,20,w);
const parkway=(x,y)=>`<rect x="${x-26}" y="${y-13}" width="52" height="26.500" rx="12" fill="#fff" stroke="#777" stroke-width="1.600"/>`+shieldText(x,y+7,'TSP',19.500,33);
const pin=(x,y)=>`<g transform="translate(${x-25} ${y})"><ellipse cx="0" cy="0" rx="30" ry="10" transform="translate(45 58) rotate(-46)" fill="#000" opacity=".36" filter="url(#soft)"/><path d="M25 1C11.500 1 1 11.500 1 25c0 8 3.500 14 7.500 22L25 79l16.500-32C45.500 39 49 33 49 25C49 11.500 38.500 1 25 1z" fill="url(#pin)" stroke="#2c6ea6" stroke-width="1.600"/><path d="M25 4C13.500 4 4 13.500 4 25c0 7 3.200 13 7 20.500L25 73l14-27.500C42.800 38 46 32 46 25C46 13.500 36.500 4 25 4z" fill="none" stroke="#fff" stroke-opacity=".14" stroke-width="2"/><circle cx="25" cy="25" r="9.400" fill="#fff" stroke="#2d74b5" stroke-width="2"/></g>`;

define('osm-map',`<style>
:host{display:block;position:relative;box-sizing:border-box;width:2244px;height:902px;border:2px solid #7fcfe6;background:#f8f5f0;overflow:hidden}
svg{display:block;font-family:"Noto Sans",sans-serif}
zoom-buttons{position:absolute;left:20px;top:20px}map-popup{position:absolute;left:868px;top:11px}map-credit{position:absolute;right:0;bottom:0}
</style><svg width="2240" height="898" viewBox="860 255 2240 898"></svg><zoom-buttons></zoom-buttons><map-popup></map-popup><map-credit></map-credit>`,(el,root)=>{
 root.querySelector('svg').innerHTML=`<defs><linearGradient id="pin" x1="0" y1="0" x2="0" y2="1"><stop offset="0" stop-color="#4295d0"/><stop offset="1" stop-color="#1766c0"/></linearGradient><filter id="soft" x="-60%" y="-150%" width="220%" height="400%"><feGaussianBlur stdDeviation="6.500"/></filter></defs>`
 +area(GREEN,'#f2f3eb')+area(LEAF,'#edf1e6')+scrub()+stroke(HEDGE,'stroke="#d8dfd5" stroke-width="1.800" stroke-dasharray="8 6"')
 +area(WATER,'#cedce4')+stroke(THIN,'stroke="#c6c9d6" stroke-width="1.500"')
 +stroke(ROADS,'stroke="#c9b399" stroke-width="4.400"')+stroke(HIGHWAYS,'stroke="#c9b094" stroke-width="6.200"')
 +stroke(ROADS,'stroke="#e2d8c9" stroke-width="2.300"')+stroke(HIGHWAYS,'stroke="#ddcab1" stroke-width="4.400"')+area(JUNCTIONS,'#ddcab1','stroke="#c9b094" stroke-width=".8"')
 +stroke(BORDERS,'stroke="#a39fb0" stroke-width="3.800" stroke-dasharray="13 4 4 4"')
 +interstate(1430,1060,'84')+interstate(1809,915.500,'87')+interstate(2435,1049,'84')+usRoute(2025,648,'9',11)+usRoute(1861,1107,'9W',29)+usRoute(2771,1141,'7',11)
 +parkway(2228,686.500)+parkway(2245,837.500)+parkway(2218,995.500)+parkway(2190,1098.500)
 +LABELS.map(([t,x,y,s,w])=>`<text x="${x}" y="${y}" font-size="${SIZES[s]}" ${t.length>1?`textLength="${w}"`:''} lengthAdjust="spacingAndGlyphs" fill="#36363c" stroke="#fbf9f6" stroke-width="5" stroke-linejoin="round" paint-order="stroke">${t}</text>`).join('')
 +pin(2037,523.500)+pin(1837,672.500)+pin(2069,845);
});

define('page-preview',`<style>
:host{display:flex;flex-direction:column;flex:1}
osm-map{margin-left:258px}.row{display:flex;gap:40px;width:2240px;margin-left:260px}
.one{margin-top:38px}.two{margin-top:40px}</style>
<site-header></site-header><osm-map></osm-map><div class="row one"><drop-zone></drop-zone><drop-zone></drop-zone></div><div class="row two"><drop-zone></drop-zone><drop-zone></drop-zone><drop-zone></drop-zone></div>`);

define('callout-note',`<style>:host{position:absolute;left:390px;top:1080px;width:530px;height:290px;pointer-events:none}svg{display:block;overflow:visible;filter:drop-shadow(0 3px 2px rgba(0,0,0,.35))}</style>
<svg width="530" height="290" viewBox="390 1080 530 290"><path d="M407.500 1098 499.500 1116.500Q488 1122 481 1130.500C494 1151 530 1185 602.500 1244Q605.500 1251 599 1251.500C550 1214 510 1180 457 1161Q450 1171 448 1184z" fill="#ff2e6f"/></svg>
<svg width="530" height="1" style="margin-top:-290px" viewBox="390 1080 530 1"><text x="463.500" y="1336.500" textLength="424" lengthAdjust="spacingAndGlyphs" font-family="Liberation Sans,sans-serif" font-weight="700" font-size="49" fill="#ff2e6f" stroke="#fff" stroke-width="9" stroke-linejoin="round" paint-order="stroke">Add more markers</text></svg>`);

define('app-shell',`<style>:host{display:flex;position:relative;width:3310px;height:1511px;overflow:hidden;background:#fff}edit-panel{z-index:1}page-preview{width:2710px}callout-note{z-index:2}</style><edit-panel></edit-panel><page-preview></page-preview><callout-note></callout-note>`);
</script>
</body>
</html>
